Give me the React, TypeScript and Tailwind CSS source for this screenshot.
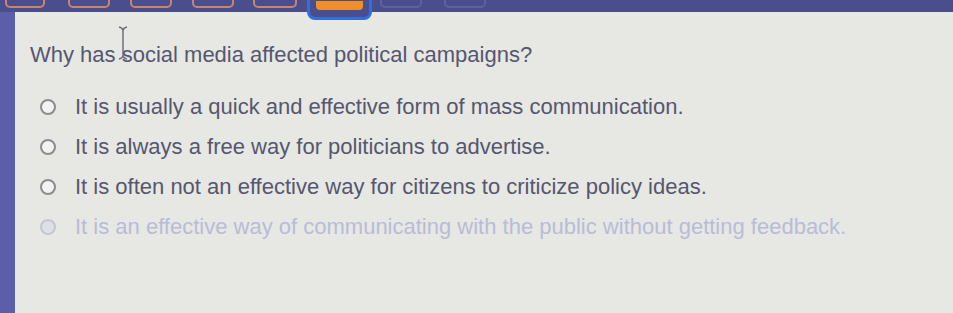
import React from "react";

const options = [
  "It is usually a quick and effective form of mass communication.",
  "It is always a free way for politicians to advertise.",
  "It is often not an effective way for citizens to criticize policy ideas.",
  "It is an effective way of communicating with the public without getting feedback.",
];

function Tab({ w, ml, faint }: { w: number; ml: number; faint?: boolean }) {
  return (
    <div
      className={`h-[20px] rounded-b-[5px] border-2 ${faint ? "border-[#5d619c]" : "border-[#c98470]"} bg-[#4a4e8c]`}
      style={{ width: w, marginLeft: ml }}
    />
  );
}

export default function App() {
  return (
    <div className="w-[953px] h-[313px] overflow-hidden bg-[#4a4e8c] flex flex-col" style={{ fontFamily: '"Liberation Sans", Arial, sans-serif' }}>
      <div className="h-[12px] flex items-end shrink-0 relative z-10">
        <div className="flex items-start h-[12px] overflow-visible">
          <div className="flex mt-[-12px]">
            <Tab w={40} ml={5} />
            <Tab w={42} ml={23} />
            <Tab w={42} ml={20} />
            <Tab w={42} ml={20} />
            <Tab w={44} ml={19} />
            <div className="ml-[10px] w-[65px] h-[32px] rounded-b-[8px] border-[3px] border-[#2f6fe0] bg-[#4a4e8c] flex justify-center pt-[10px]">
              <div className="w-[47px] h-[9px] rounded-b-[4px] bg-[#ef8f2c]" />
            </div>
            <Tab w={42} ml={8} faint />
            <Tab w={42} ml={22} faint />
          </div>
        </div>
      </div>
      <div className="flex flex-1">
        <div className="w-[15px] bg-[#5a5fa8] shrink-0" />
        <div className="flex-1 bg-[#e7e7e3] relative pl-[15px] pt-[31px]">
          <div className="text-[22px] leading-[24px] text-[#55576f]">
            Why has social media affected political campaigns?
          </div>
          <svg className="absolute left-[101px] top-[14px]" width="14" height="34" viewBox="0 0 14 34">
            <path d="M3 1 Q7 2 7 5 L7 29 Q7 32 3 33 M11 1 Q7 2 7 5 M7 29 Q7 32 11 33" stroke="#6a6a78" strokeWidth="1.4" fill="none" />
          </svg>
          <div className="flex flex-col gap-[16px] mt-[28px] pl-[10px]">
            {options.map((o, i) => (
              <div key={i} className="flex items-center h-[24px]">
                <div className={`w-[16px] h-[16px] rounded-full border-2 shrink-0 ${i === 3 ? "border-[#c4c6d2] bg-[#dfe0e6]" : "border-[#8c8c90] bg-[#f2f2ef]"}`} />
                <div className={`ml-[19px] text-[22px] leading-[24px] ${i === 3 ? "text-[#b9bcd8]" : "text-[#55576f]"}`}>{o}</div>
              </div>
            ))}
          </div>
        </div>
      </div>
    </div>
  );
}
